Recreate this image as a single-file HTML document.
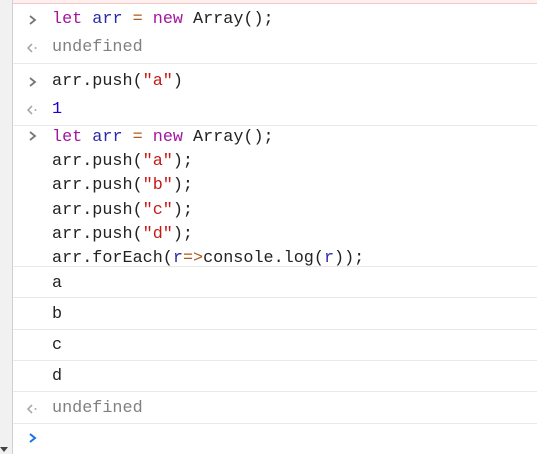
<!DOCTYPE html>
<html><head><style>
html,body{margin:0;padding:0;}
body{width:537px;height:454px;background:#fff;position:relative;overflow:hidden;font-family:"Liberation Mono",monospace;font-size:16.8px;color:#222;}
.gut{position:absolute;left:0;top:0;width:12px;height:454px;background:#f1f1f1;border-right:1px solid #d0d0d0;}
.top{position:absolute;left:13px;right:0;top:0;height:3px;background:#fff0f0;border-bottom:1px solid #f5c6c6;}
.sep{position:absolute;left:13px;right:0;height:1px;background:#e8e8e8;}
.l{position:absolute;left:52px;height:20px;line-height:20px;white-space:pre;}
svg{position:absolute;}
.k{color:#a4159e}.v{color:#2a2aa8}.o{color:#b05a1a}.s{color:#c41a16}.n{color:#1c00cf}.g{color:#808080}
.tri{position:absolute;left:0;top:447px;width:0;height:0;border-left:4px solid transparent;border-right:4px solid transparent;border-top:5px solid #444;}
</style></head><body>
<div class="gut"></div><div class="tri"></div>
<div class="top"></div>

<svg style="left:28px;top:14px" width="10" height="12"><path d="M2 2 L7 6 L2 10" fill="none" stroke="#777" stroke-width="1.8"/></svg>
<div class="l" style="top:10px"><span class="k">let</span> <span class="v">arr</span> <span class="o">=</span> <span class="k">new</span> Array();</div>
<svg style="left:26px;top:42px" width="12" height="12"><path d="M6 2 L2 6 L6 10" fill="none" stroke="#aaa" stroke-width="1.6"/><circle cx="9.5" cy="6" r="1" fill="#aaa"/></svg>
<div class="l g" style="top:38px">undefined</div>
<div class="sep" style="top:63px"></div>
<svg style="left:28px;top:76px" width="10" height="12"><path d="M2 2 L7 6 L2 10" fill="none" stroke="#777" stroke-width="1.8"/></svg>
<div class="l" style="top:72px">arr.push(<span class="s">"a"</span>)</div>
<svg style="left:26px;top:104px" width="12" height="12"><path d="M6 2 L2 6 L6 10" fill="none" stroke="#aaa" stroke-width="1.6"/><circle cx="9.5" cy="6" r="1" fill="#aaa"/></svg>
<div class="l n" style="top:100px">1</div>
<div class="sep" style="top:125px"></div>
<svg style="left:28px;top:130px" width="10" height="12"><path d="M2 2 L7 6 L2 10" fill="none" stroke="#777" stroke-width="1.8"/></svg>
<div class="l" style="top:126px;line-height:24.2px;height:auto"><span class="k">let</span> <span class="v">arr</span> <span class="o">=</span> <span class="k">new</span> Array();
arr.push(<span class="s">"a"</span>);
arr.push(<span class="s">"b"</span>);
arr.push(<span class="s">"c"</span>);
arr.push(<span class="s">"d"</span>);
arr.forEach(<span class="v">r</span><span class="o">=&gt;</span>console.log(<span class="v">r</span>));</div>
<div class="sep" style="top:266px"></div>
<div class="l" style="top:274px">a</div>
<div class="sep" style="top:297px"></div>
<div class="l" style="top:305px">b</div>
<div class="sep" style="top:329px"></div>
<div class="l" style="top:336px">c</div>
<div class="sep" style="top:360px"></div>
<div class="l" style="top:367px">d</div>
<div class="sep" style="top:391px"></div>
<svg style="left:26px;top:403px" width="12" height="12"><path d="M6 2 L2 6 L6 10" fill="none" stroke="#aaa" stroke-width="1.6"/><circle cx="9.5" cy="6" r="1" fill="#aaa"/></svg>
<div class="l g" style="top:399px">undefined</div>
<div class="sep" style="top:423px"></div>
<svg style="left:28px;top:432px" width="10" height="12"><path d="M2 2 L7 6 L2 10" fill="none" stroke="#1a73e8" stroke-width="2"/></svg>
</body></html>
